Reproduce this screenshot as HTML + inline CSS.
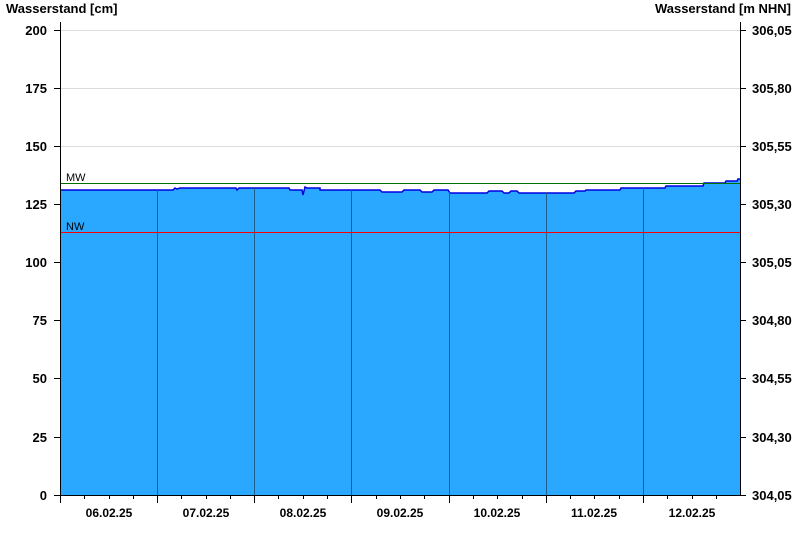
<!DOCTYPE html>
<html><head><meta charset="utf-8"><style>
html,body{margin:0;padding:0;background:#fff;}
svg{display:block;font-family:"Liberation Sans",Arial,sans-serif;}
</style></head><body>
<svg width="800" height="550" viewBox="0 0 800 550">
<text x="6" y="13" font-size="13" font-weight="bold" fill="#000">Wasserstand [cm]</text>
<text x="791" y="13" font-size="13" font-weight="bold" fill="#000" text-anchor="end">Wasserstand [m NHN]</text>
<g stroke="#dcdcdc" stroke-width="1">
<line x1="60" y1="30.5" x2="740" y2="30.5"/>
<line x1="60" y1="88.5" x2="740" y2="88.5"/>
<line x1="60" y1="146.5" x2="740" y2="146.5"/>
</g>
<path d="M60,190 L173,190 L175,188 L177,189 L180,188 L236,188 L237,190 L239,188 L289,188 L290,190 L302,190 L303,195 L305,187 L307,188 L320,188 L320,190 L380,190 L382,192 L402,192 L404,190 L420,190 L422,192 L432,192 L434,190 L448,190 L450,193 L487,193 L489,191 L502,191 L504,193 L509,193 L511,191 L517,191 L519,193 L574,193 L576,191 L585,191 L586,190 L620,190 L621,188 L665,188 L666,186 L703,186 L704,183 L725,183 L726,181 L737,181 L738,179 L740,179 L740,495 L60,495 Z" fill="#2aa8ff"/>
<path d="M60,190 L173,190 L175,188 L177,189 L180,188 L236,188 L237,190 L239,188 L289,188 L290,190 L302,190 L303,195 L305,187 L307,188 L320,188 L320,190 L380,190 L382,192 L402,192 L404,190 L420,190 L422,192 L432,192 L434,190 L448,190 L450,193 L487,193 L489,191 L502,191 L504,193 L509,193 L511,191 L517,191 L519,193 L574,193 L576,191 L585,191 L586,190 L620,190 L621,188 L665,188 L666,186 L703,186 L704,183 L725,183 L726,181 L737,181 L738,179 L740,179" fill="none" stroke="#0000e0" stroke-width="1.5"/>
<g stroke="#1c5f8f" stroke-width="1">
<line x1="157.5" y1="190" x2="157.5" y2="495"/>
<line x1="254.5" y1="188" x2="254.5" y2="495"/>
<line x1="351.5" y1="190" x2="351.5" y2="495"/>
<line x1="449.5" y1="192" x2="449.5" y2="495"/>
<line x1="546.5" y1="193" x2="546.5" y2="495"/>
<line x1="643.5" y1="188" x2="643.5" y2="495"/>
</g>
<line x1="60" y1="183.5" x2="740" y2="183.5" stroke="#007000" stroke-width="1"/>
<line x1="60" y1="232.5" x2="740" y2="232.5" stroke="#ff0000" stroke-width="1"/>
<text x="66" y="181" font-size="11" fill="#000">MW</text>
<text x="66" y="230" font-size="11" fill="#000">NW</text>
<g stroke="#000" stroke-width="1">
<line x1="60.5" y1="22" x2="60.5" y2="495"/>
<line x1="740.5" y1="22" x2="740.5" y2="495"/>
<line x1="60" y1="495.5" x2="741" y2="495.5"/>
<line x1="54" y1="30.5" x2="60" y2="30.5"/><line x1="54" y1="88.5" x2="60" y2="88.5"/><line x1="54" y1="146.5" x2="60" y2="146.5"/><line x1="54" y1="204.5" x2="60" y2="204.5"/><line x1="54" y1="262.5" x2="60" y2="262.5"/><line x1="54" y1="320.5" x2="60" y2="320.5"/><line x1="54" y1="378.5" x2="60" y2="378.5"/><line x1="54" y1="437.5" x2="60" y2="437.5"/><line x1="54" y1="495.5" x2="60" y2="495.5"/>
<line x1="740" y1="30.5" x2="746" y2="30.5"/><line x1="740" y1="88.5" x2="746" y2="88.5"/><line x1="740" y1="146.5" x2="746" y2="146.5"/><line x1="740" y1="204.5" x2="746" y2="204.5"/><line x1="740" y1="262.5" x2="746" y2="262.5"/><line x1="740" y1="320.5" x2="746" y2="320.5"/><line x1="740" y1="378.5" x2="746" y2="378.5"/><line x1="740" y1="437.5" x2="746" y2="437.5"/><line x1="740" y1="495.5" x2="746" y2="495.5"/>
<line x1="60.5" y1="495" x2="60.5" y2="503"/><line x1="157.5" y1="495" x2="157.5" y2="503"/><line x1="254.5" y1="495" x2="254.5" y2="503"/><line x1="351.5" y1="495" x2="351.5" y2="503"/><line x1="449.5" y1="495" x2="449.5" y2="503"/><line x1="546.5" y1="495" x2="546.5" y2="503"/><line x1="643.5" y1="495" x2="643.5" y2="503"/>
<line x1="84.5" y1="495" x2="84.5" y2="499"/><line x1="109.5" y1="495" x2="109.5" y2="499"/><line x1="133.5" y1="495" x2="133.5" y2="499"/>
<line x1="181.5" y1="495" x2="181.5" y2="499"/><line x1="206.5" y1="495" x2="206.5" y2="499"/><line x1="230.5" y1="495" x2="230.5" y2="499"/>
<line x1="278.5" y1="495" x2="278.5" y2="499"/><line x1="303.5" y1="495" x2="303.5" y2="499"/><line x1="327.5" y1="495" x2="327.5" y2="499"/>
<line x1="376.5" y1="495" x2="376.5" y2="499"/><line x1="400.5" y1="495" x2="400.5" y2="499"/><line x1="424.5" y1="495" x2="424.5" y2="499"/>
<line x1="473.5" y1="495" x2="473.5" y2="499"/><line x1="497.5" y1="495" x2="497.5" y2="499"/><line x1="522.5" y1="495" x2="522.5" y2="499"/>
<line x1="570.5" y1="495" x2="570.5" y2="499"/><line x1="594.5" y1="495" x2="594.5" y2="499"/><line x1="619.5" y1="495" x2="619.5" y2="499"/>
<line x1="667.5" y1="495" x2="667.5" y2="499"/><line x1="692.5" y1="495" x2="692.5" y2="499"/><line x1="716.5" y1="495" x2="716.5" y2="499"/>
</g>
<g font-size="13" font-weight="bold" fill="#000" text-anchor="end">
<text x="47" y="35">200</text><text x="47" y="93">175</text><text x="47" y="151">150</text><text x="47" y="209">125</text><text x="47" y="267">100</text><text x="47" y="325">75</text><text x="47" y="383">50</text><text x="47" y="442">25</text><text x="47" y="500">0</text>
</g>
<g font-size="13" font-weight="bold" fill="#000">
<text x="752" y="35">306,05</text><text x="752" y="93">305,80</text><text x="752" y="151">305,55</text><text x="752" y="209">305,30</text><text x="752" y="267">305,05</text><text x="752" y="325">304,80</text><text x="752" y="383">304,55</text><text x="752" y="442">304,30</text><text x="752" y="500">304,05</text>
</g>
<g font-size="12" font-weight="bold" fill="#000" text-anchor="middle">
<text x="109" y="517">06.02.25</text><text x="206" y="517">07.02.25</text><text x="303" y="517">08.02.25</text><text x="400" y="517">09.02.25</text><text x="497" y="517">10.02.25</text><text x="594" y="517">11.02.25</text><text x="692" y="517">12.02.25</text>
</g>
</svg>
</body></html>
